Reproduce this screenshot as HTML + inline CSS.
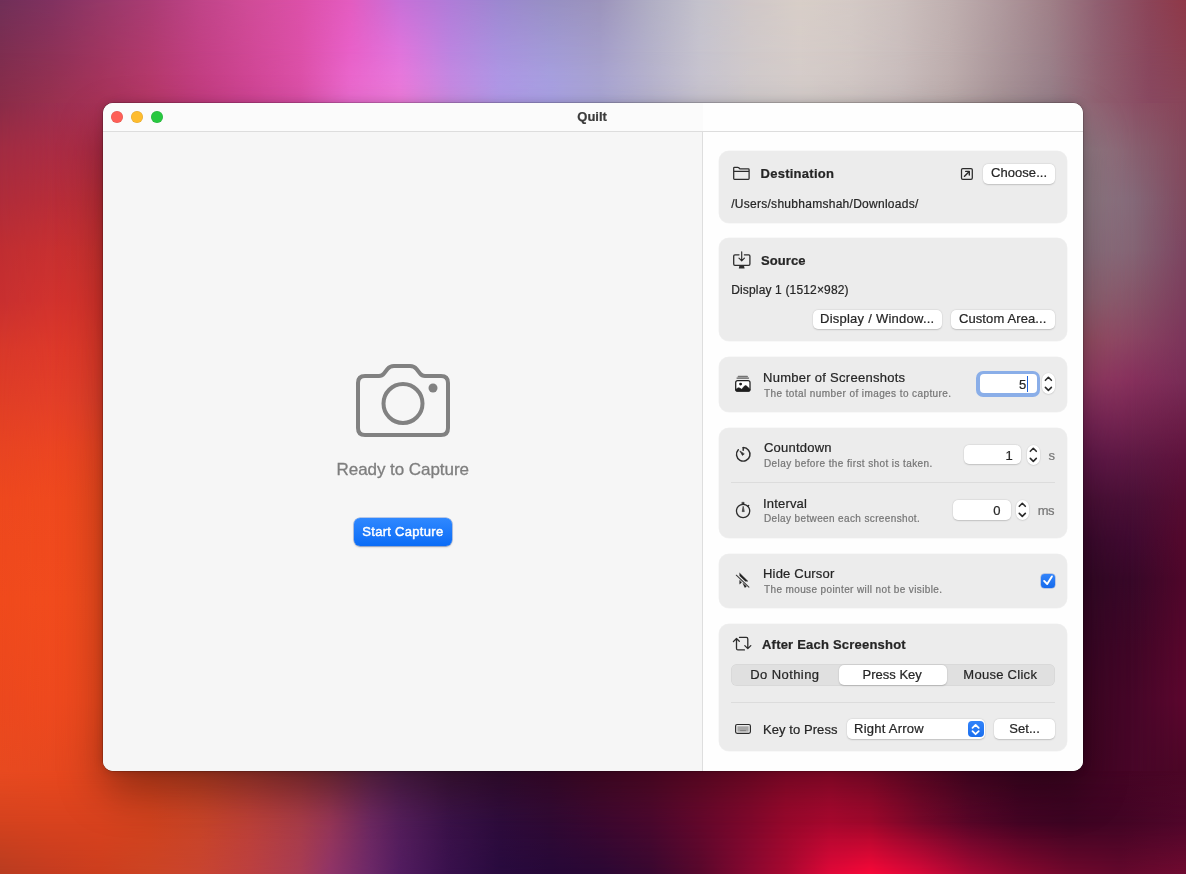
<!DOCTYPE html>
<html><head><meta charset="utf-8"><title>Quilt</title>
<style>
*{box-sizing:border-box;margin:0;padding:0}
html,body{width:1186px;height:874px;overflow:hidden}
body{font-family:"Liberation Sans",sans-serif;color:#262626;position:relative;background:#8a2040}
#bta,#btb,#btc{position:absolute;left:0px;top:0px;width:1186px;height:117px}
#bta{background:linear-gradient(to right,#703058 0.00%,#803260 4.22%,#963868 8.43%,#aa3c74 12.65%,#c04488 16.86%,#d04c98 21.08%,#dc50a8 25.30%,#e45cc0 29.51%,#c870d8 33.73%,#b07cd8 37.94%,#9c88d0 42.16%,#9890c4 46.37%,#9c94bc 50.59%,#b0aec4 54.81%,#c4c2cc 59.02%,#d0c8c8 63.24%,#d8cec8 67.45%,#d4cac6 71.67%,#ccc0be 75.89%,#c0b0b0 80.10%,#b09a9e 84.32%,#a08088 88.53%,#905e70 92.75%,#8c4458 96.96%,#903848 100.00%)}
#btb{background:linear-gradient(to right,#7d2e50 0.00%,#8c3157 4.22%,#9f3560 8.43%,#b13a6e 12.65%,#c24084 16.86%,#d04896 21.08%,#dc50a8 25.30%,#e860c8 29.51%,#e074dc 33.73%,#bc84e0 37.94%,#a892de 42.16%,#a29ad6 46.37%,#a49eca 50.59%,#b4b1ca 54.81%,#c6c3ce 59.02%,#d0c9ca 63.24%,#d6cdc9 67.45%,#d2c8c5 71.67%,#cabebd 75.89%,#beaeae 80.10%,#ac979b 84.32%,#9c8089 88.53%,#905f70 92.75%,#8a465c 96.96%,#8c3e50 100.00%);-webkit-mask-image:linear-gradient(to bottom,rgba(0,0,0,0) 0px,#000 52px);mask-image:linear-gradient(to bottom,rgba(0,0,0,0) 0px,#000 52px)}
#btc{background:linear-gradient(to right,#8a2c48 0.00%,#98304e 4.22%,#a83258 8.43%,#b83868 12.65%,#c43c80 16.86%,#d04494 21.08%,#dc50a8 25.30%,#ec6cd0 29.51%,#f07cdc 33.73%,#cc8ce4 37.94%,#b49cec 42.16%,#aca4e8 46.37%,#aca8d8 50.59%,#b8b4d0 54.81%,#c8c4d0 59.02%,#d0cacc 63.24%,#d4ccca 67.45%,#d0c6c4 71.67%,#c8bcbc 75.89%,#bcacac 80.10%,#a89498 84.32%,#98808a 88.53%,#906070 92.75%,#884860 96.96%,#884458 100.00%);-webkit-mask-image:linear-gradient(to bottom,rgba(0,0,0,0) 52px,#000 103px);mask-image:linear-gradient(to bottom,rgba(0,0,0,0) 52px,#000 103px)}
#bba,#bbb,#bbc{position:absolute;left:0px;top:757px;width:1186px;height:117px}
#bba{background:linear-gradient(to right,#e84a20 0.00%,#e8481e 4.22%,#e4461e 8.43%,#d8441e 12.65%,#c84224 16.86%,#b43c30 21.08%,#9c3438 25.30%,#883040 27.82%,#6c2850 31.20%,#582050 33.73%,#44163e 37.94%,#3c0e38 42.16%,#420a32 46.37%,#500a2c 50.59%,#5e0a2c 54.81%,#740a2c 59.02%,#8c0a2e 63.24%,#a00a30 66.27%,#a80a32 69.98%,#980a30 73.36%,#74082c 77.57%,#540628 81.79%,#440424 86.00%,#400422 90.22%,#440424 94.44%,#4c0626 100.00%)}
#bbb{background:linear-gradient(to right,#d4421e 0.00%,#d8421e 4.22%,#d8421e 8.43%,#d0421e 12.65%,#c84428 16.86%,#bc4038 21.08%,#a83c48 25.30%,#963656 27.82%,#6c2860 31.20%,#541e5a 33.73%,#3a1248 37.94%,#2e0c3c 42.16%,#300a34 46.37%,#3c0830 50.59%,#4a082e 54.81%,#64082c 59.02%,#80082c 63.24%,#98082c 66.27%,#a8082e 69.98%,#a0082c 73.36%,#78082a 77.57%,#580628 81.79%,#440424 86.00%,#3c0422 90.22%,#420424 94.44%,#50062a 100.00%);-webkit-mask-image:linear-gradient(to bottom,rgba(0,0,0,0) 14px,#000 65px);mask-image:linear-gradient(to bottom,rgba(0,0,0,0) 14px,#000 65px)}
#bbc{background:linear-gradient(to right,#b83c20 0.00%,#c43c20 4.22%,#cc3e1e 8.43%,#cc4424 12.65%,#c84430 16.86%,#bc4040 21.08%,#a83c54 25.30%,#903468 27.82%,#6c2868 31.20%,#521c60 33.73%,#38104c 37.94%,#280a3e 42.16%,#260838 46.37%,#2a0834 50.59%,#380830 54.81%,#58082c 59.02%,#880830 63.24%,#a80830 66.27%,#e00838 69.98%,#f80838 73.36%,#d80838 77.57%,#a80834 81.79%,#88082e 86.00%,#70082c 90.22%,#64082c 94.44%,#700a30 100.00%);-webkit-mask-image:linear-gradient(to bottom,rgba(0,0,0,0) 65px,#000 117px);mask-image:linear-gradient(to bottom,rgba(0,0,0,0) 65px,#000 117px)}
#bla,#blb,#blc{position:absolute;left:0px;top:103px;width:117px;height:668px}
#bla{background:linear-gradient(to bottom,#8a2c48 0.00%,#a22c42 7.04%,#b02c3a 14.52%,#c02e32 22.01%,#c83030 29.49%,#d8382a 36.98%,#e03e26 44.46%,#e84422 51.95%,#ee481e 59.43%,#f04a1c 74.40%,#ec481e 89.37%,#e84a20 100.00%)}
#blb{background:linear-gradient(to bottom,#992f50 0.00%,#a92c44 7.04%,#b72d39 14.52%,#c73031 22.01%,#d1322e 29.49%,#dd392a 36.98%,#e33f28 44.46%,#eb4522 51.95%,#ef491e 59.43%,#f14b1d 74.40%,#ee491e 89.37%,#e6481f 100.00%);-webkit-mask-image:linear-gradient(to right,rgba(0,0,0,0) 0px,#000 52px);mask-image:linear-gradient(to right,rgba(0,0,0,0) 0px,#000 52px)}
#blc{background:linear-gradient(to bottom,#a83258 0.00%,#b02c46 7.04%,#be2e38 14.52%,#ce3230 22.01%,#da342c 29.49%,#e23a2a 36.98%,#e6402a 44.46%,#ee4622 51.95%,#f04a1e 59.43%,#f24c1e 74.40%,#f04a1e 89.37%,#e4461e 100.00%);-webkit-mask-image:linear-gradient(to right,rgba(0,0,0,0) 52px,#000 103px);mask-image:linear-gradient(to right,rgba(0,0,0,0) 52px,#000 103px)}
#bra,#brb,#brc{position:absolute;left:1069px;top:103px;width:117px;height:668px}
#bra{background:linear-gradient(to bottom,#946c7a 0.00%,#98808a 7.04%,#947e88 14.52%,#907482 22.01%,#946676 29.49%,#9c5268 35.48%,#983e66 41.47%,#7e285a 47.46%,#62184a 53.44%,#4c1038 59.43%,#3c0a2e 65.42%,#340826 71.41%,#3a0626 81.89%,#3e0624 89.37%,#400422 100.00%)}
#brb{background:linear-gradient(to bottom,#8b5065 0.00%,#886070 7.04%,#846878 14.52%,#846474 22.01%,#865468 29.49%,#8a4462 35.48%,#86305c 41.47%,#72244f 47.46%,#5c1842 53.44%,#4a1036 59.43%,#400a30 65.42%,#380828 71.41%,#400626 81.89%,#460628 89.37%,#480628 100.00%);-webkit-mask-image:linear-gradient(to right,rgba(0,0,0,0) 14px,#000 65px);mask-image:linear-gradient(to right,rgba(0,0,0,0) 14px,#000 65px)}
#brc{background:linear-gradient(to bottom,#884458 0.00%,#84485c 7.04%,#80485e 14.52%,#7c4460 22.01%,#7c3c5c 29.49%,#7c345a 35.48%,#782c56 41.47%,#6c1e48 47.46%,#5e123c 53.44%,#560c32 59.43%,#54082c 65.42%,#50062a 71.41%,#58062c 81.89%,#5c062e 89.37%,#4c0626 100.00%);-webkit-mask-image:linear-gradient(to right,rgba(0,0,0,0) 65px,#000 117px);mask-image:linear-gradient(to right,rgba(0,0,0,0) 65px,#000 117px)}
#win{position:absolute;left:103px;top:103px;width:980px;height:668px;border-radius:10px;background:#f6f6f6;overflow:hidden;
box-shadow:0 0 0 0.5px rgba(0,0,0,0.3),0 20px 44px rgba(0,0,0,0.34),0 0 10px rgba(0,0,0,0.18)}
#c{position:absolute;left:-103px;top:-103px;width:1186px;height:874px;will-change:transform}
#c div,#c svg{position:absolute}
#tb{left:103px;top:103px;width:980px;height:28px;background:#fbfbfb}
#tbl{left:103px;top:131px;width:980px;height:1px;background:#dddddd}
.tl{top:111px;width:12px;height:12px;border-radius:50%}
#lp{left:103px;top:132px;width:599px;height:639px;background:#f6f6f6}
#rp{left:703px;top:132px;width:380px;height:639px;background:#fefefe}
#dv{left:702px;top:132px;width:1px;height:639px;background:#dedede}
.card{left:719px;width:348px;background:#ececec;border-radius:10px;box-shadow:0 0 0 0.5px rgba(0,0,0,0.05)}
.x{white-space:nowrap;line-height:1;-webkit-text-stroke:0.22px currentColor}
.btn{background:#fff;border-radius:5px;box-shadow:0 0 0 0.5px rgba(0,0,0,0.03),0 0.5px 1.5px rgba(0,0,0,0.17)}
.fld{background:#fff;border-radius:5px;box-shadow:0 0 0 0.5px rgba(0,0,0,0.04),0 0.5px 1.5px rgba(0,0,0,0.16)}
.stp{background:#fff;border-radius:6.6px;box-shadow:0 0 0 0.5px rgba(0,0,0,0.03),0 0.5px 1.5px rgba(0,0,0,0.17)}
.hr{height:1px;background:#dcdcdc;left:731px;width:324px}
</style></head><body>
<div id="bta"></div><div id="btb"></div><div id="btc"></div>
<div id="bba"></div><div id="bbb"></div><div id="bbc"></div>
<div id="bla"></div><div id="blb"></div><div id="blc"></div>
<div id="bra"></div><div id="brb"></div><div id="brc"></div>
<div id="win"><div id="c">
<div id="tb"></div><div style="left:703px;top:103px;width:380px;height:28px;background:#fefefe"></div><div id="tbl"></div>
<div class="tl" style="left:111px;background:#fe5f57;box-shadow:inset 0 0 0 0.5px rgba(0,0,0,0.12)"></div>
<div class="tl" style="left:131px;background:#febc2e;box-shadow:inset 0 0 0 0.5px rgba(0,0,0,0.12)"></div>
<div class="tl" style="left:151px;background:#28c840;box-shadow:inset 0 0 0 0.5px rgba(0,0,0,0.12)"></div>
<div id="lp"></div><div id="rp"></div><div id="dv"></div>

<!-- camera -->
<svg style="left:350px;top:360px" width="106" height="84" viewBox="350 360 106 84" fill="none" stroke="#818181" stroke-width="4" stroke-linejoin="round" stroke-linecap="round">
<path d="M365 376 H379 Q382 376 384 373.5 L387.5 369 Q390 366 394 366 H410 Q414 366 416.500 369 L420 373.500 Q422 376 425 376 H441 Q448 376 448 383 V428 Q448 435 441 435 H365 Q358 435 358 428 V383 Q358 376 365 376 Z"/>
<circle cx="403" cy="403.500" r="19.500"/>
<circle cx="433" cy="388" r="4.500" fill="#818181" stroke="none"/>
</svg>
<div style="left:353.500px;top:518px;width:98px;height:28px;border-radius:6px;background:linear-gradient(#2f88ff,#0b6cf6);box-shadow:0 0 0 0.5px rgba(0,70,200,0.5),0 1px 2px rgba(0,0,0,0.25)"></div>

<!-- cards -->
<div class="card" style="top:151px;height:71.500px"></div>
<div class="card" style="top:238px;height:103px"></div>
<div class="card" style="top:357px;height:54.500px"></div>
<div class="card" style="top:427.500px;height:110.500px"></div>
<div class="card" style="top:553.500px;height:54.500px"></div>
<div class="card" style="top:624px;height:126.500px"></div>

<!-- destination -->
<div class="btn" style="left:983px;top:164px;width:71.500px;height:19.500px"></div>
<!-- source -->
<div class="btn" style="left:813px;top:309.500px;width:128.500px;height:19.500px"></div>
<div class="btn" style="left:950.500px;top:309.500px;width:104.500px;height:19.500px"></div>
<!-- number -->
<div style="left:976px;top:370.700px;width:64px;height:26px;border-radius:7px;background:#8aaee8"></div>
<div style="left:979.600px;top:374px;width:57.200px;height:19.400px;border-radius:4px;background:#fff"></div>
<div style="left:1026.500px;top:376px;width:1.500px;height:15.600px;background:#1f62d8"></div>
<div class="stp" style="left:1041.800px;top:373.400px;width:13.200px;height:20.600px"></div>
<!-- countdown -->
<div class="fld" style="left:964.200px;top:445.200px;width:57.300px;height:19px"></div>
<div class="stp" style="left:1026.800px;top:445px;width:13.200px;height:20px"></div>
<div class="hr" style="top:482px"></div>
<div class="fld" style="left:953.200px;top:500.200px;width:58px;height:19.400px"></div>
<div class="stp" style="left:1015.800px;top:500px;width:13.200px;height:20px"></div>
<!-- hide cursor -->
<div style="left:1041px;top:573.600px;width:14px;height:14px;border-radius:3.500px;background:linear-gradient(#3384fa,#156aec);box-shadow:0 0 0 0.5px rgba(0,60,190,0.4)"></div>
<!-- after each -->
<div style="left:731px;top:664px;width:323.500px;height:21.500px;border-radius:6px;background:#e0e0e0;box-shadow:inset 0 0 0 0.5px rgba(0,0,0,0.06)"></div>
<div class="btn" style="left:839px;top:665px;width:107.500px;height:19.500px"></div>
<div class="hr" style="top:702px"></div>
<div class="btn" style="left:846.500px;top:719px;width:138px;height:20px"></div>
<div style="left:967.700px;top:720.900px;width:16px;height:16.200px;border-radius:4px;background:linear-gradient(#3384fa,#1a6eee)"></div>
<div class="btn" style="left:994px;top:719px;width:61px;height:20px"></div>

<svg style="left:0;top:0" width="1186" height="874" viewBox="0 0 1186 874" fill="none" stroke="#2c2c2c" stroke-width="1.3" stroke-linecap="round" stroke-linejoin="round">
<!-- folder -->
<path d="M733.700 178.500 V168.100 Q733.700 167.300 734.500 167.300 H737.700 Q738.300 167.300 738.800 167.800 L739.500 168.500 Q739.900 168.900 740.500 168.900 H748.300 Q749.100 168.900 749.100 169.700 V178.500 Q749.100 179.300 748.300 179.300 H734.500 Q733.700 179.300 733.700 178.500 Z M733.700 171.300 H749.100" stroke-width="1.250"/>
<!-- reveal arrow in square -->
<rect x="961.500" y="168.500" width="10.800" height="10.800" rx="1.300" stroke-width="1.250"/>
<path d="M964.500 176.200 L969 171.700" stroke-width="1.500"/><path d="M965.700 171.400 H969.300 V175" stroke-width="1.400"/>
<!-- source: monitor w/ arrow -->
<path d="M739 254.800 H734.900 Q733.700 254.800 733.700 256 V264.100 Q733.700 265.300 734.900 265.300 H748.700 Q749.900 265.300 749.900 264.100 V256 Q749.900 254.800 748.700 254.800 H744.400"/>
<path d="M741.700 251.800 V260.500 M739 258.200 L741.700 260.900 L744.400 258.200" stroke-width="1.150"/>
<path d="M739.400 265.700 H744 L744.600 268.600 H738.800 Z" fill="#2c2c2c" stroke="none"/>
<!-- photo stack -->
<rect x="735.700" y="380.600" width="14.300" height="10.600" rx="2" fill="#fff" stroke="#1e1e1e" stroke-width="1.250"/>
<path d="M735.700 389.600 L737.700 388.100 Q738.900 387.300 740 388.200 L741.700 389.300 L744.200 386.300 Q745.600 384.900 747 386.300 L750 389.300 V389.600 Q750 391.200 748.400 391.200 H737.300 Q735.700 391.200 735.700 389.600 Z" fill="#1e1e1e" stroke="#1e1e1e" stroke-width="0.600"/>
<circle cx="740.600" cy="384.100" r="1.450" fill="#1e1e1e" stroke="none"/>
<path d="M737 378.100 H748.600" stroke="#5c5c5c" stroke-width="1.100"/>
<path d="M738.400 376.400 H747.200" stroke="#747474" stroke-width="1.500"/>
<!-- countdown timer -->
<path d="M743.200 447.600 A6.750 6.750 0 1 1 738.300 449.750" stroke-width="1.450"/>
<path d="M743.200 447.600 V450.300" stroke-width="1.450"/>
<path d="M740.100 451.300 L742.500 455.400 L744 454.100 Z" fill="#2c2c2c" stroke-width="0.700"/>
<!-- stopwatch -->
<circle cx="743.100" cy="511" r="6.650"/>
<path d="M742.200 502.300 H744.100 V504 H742.200 Z" fill="#2c2c2c" stroke-width="0.500"/>
<path d="M747.800 506.300 L748.600 505.500" stroke-width="1.500"/>
<path d="M743.100 506.600 L742.200 511.600 H744 Z" fill="#2c2c2c" stroke-width="0.600"/>
<!-- hide cursor -->
<path d="M739.800 573.200 L747.900 581.200 H745.400 L739.800 575.900 Z" fill="#1e1e1e" stroke="#1e1e1e" stroke-width="0.400"/>
<path d="M739.700 580.500 V584.100 L741.500 582.400 Z" fill="#1e1e1e" stroke="#1e1e1e" stroke-width="0.400"/>
<path d="M743 583.500 L744.800 587.400 L746.400 586.700 L745.800 585.700 Z" fill="#1e1e1e" stroke="#1e1e1e" stroke-width="0.400"/>
<path d="M736.300 575.200 L748.900 587.200" stroke="#3c3c3c" stroke-width="1.050"/>
<!-- repeat -->
<path d="M733.400 641.600 L736.500 638.500 L739.300 641.300 M736.500 638.700 V648.400 Q736.500 649.900 738 649.900 H744.400"/>
<path d="M739.500 637.400 H746.300 Q747.800 637.400 747.800 638.900 V648.400 M744.800 645.600 L747.800 648.600 L750.800 645.600"/>
<!-- keyboard -->
<rect x="735.600" y="724.500" width="14.800" height="8.800" rx="1.500" stroke-width="1.200"/>
<rect x="737.400" y="726.300" width="11.200" height="5.300" fill="#a8a8a8" stroke="none"/>
<path d="M740.500 730.600 H745.500" stroke="#7a7a7a" stroke-width="0.900"/>
<!-- stepper chevrons -->
<g stroke-width="1.600" stroke="#2a2a2a">
<path d="M1045.400 380.300 L1048.400 377.300 L1051.400 380.300 M1045.400 387.400 L1048.400 390.400 L1051.400 387.400"/>
<path d="M1030.300 451.300 L1033.300 448.300 L1036.300 451.300 M1030.300 458.400 L1033.300 461.400 L1036.300 458.400"/>
<path d="M1019.300 506.300 L1022.300 503.300 L1025.300 506.300 M1019.300 513.400 L1022.300 516.400 L1025.300 513.400"/>
</g>
<!-- checkbox check -->
<path d="M1044.100 580.900 L1047.200 584 L1051.900 576.400" stroke="#fff" stroke-width="1.900"/>
<!-- popup chevrons -->
<path d="M972.500 727.900 L975.600 724.900 L978.700 727.900 M972.500 731.200 L975.600 734.200 L978.700 731.200" stroke="#fff" stroke-width="1.800"/>
</svg>

<div class="x" style="left:577.30px;top:109.60px;font-size:13px;color:#3c3c3c;letter-spacing:0.006px;font-weight:bold">Quilt</div>
<div class="x" style="left:336.60px;top:460.60px;font-size:17px;color:#7e7e7e;letter-spacing:-0.059px;-webkit-text-stroke:0.3px #7e7e7e">Ready to Capture</div>
<div class="x" style="left:362.30px;top:525.00px;font-size:13px;color:#ffffff;letter-spacing:0.293px;-webkit-text-stroke:0.45px #fff">Start Capture</div>
<div class="x" style="left:760.50px;top:167.40px;font-size:13px;color:#262626;letter-spacing:0.266px;font-weight:bold">Destination</div>
<div class="x" style="left:991.00px;top:166.00px;font-size:13px;color:#262626;letter-spacing:0.059px">Choose...</div>
<div class="x" style="left:731.20px;top:197.50px;font-size:12px;color:#262626;letter-spacing:0.275px">/Users/shubhamshah/Downloads/</div>
<div class="x" style="left:761.10px;top:254.40px;font-size:13px;color:#262626;letter-spacing:0.052px;font-weight:bold">Source</div>
<div class="x" style="left:731.20px;top:284.20px;font-size:12px;color:#262626;letter-spacing:0.157px">Display 1 (1512×982)</div>
<div class="x" style="left:820.00px;top:312.00px;font-size:13px;color:#262626;letter-spacing:0.244px">Display / Window...</div>
<div class="x" style="left:958.90px;top:312.00px;font-size:13px;color:#262626;letter-spacing:0.117px">Custom Area...</div>
<div class="x" style="left:763.00px;top:371.00px;font-size:13px;color:#262626;letter-spacing:0.277px">Number of Screenshots</div>
<div class="x" style="left:764.00px;top:389.00px;font-size:10px;color:#767676;letter-spacing:0.414px">The total number of images to capture.</div>
<div class="x" style="left:1019.00px;top:378.00px;font-size:13px;color:#262626;letter-spacing:0.000px">5</div>
<div class="x" style="left:764.00px;top:441.00px;font-size:13px;color:#262626;letter-spacing:0.220px">Countdown</div>
<div class="x" style="left:764.00px;top:459.00px;font-size:10px;color:#767676;letter-spacing:0.398px">Delay before the first shot is taken.</div>
<div class="x" style="left:1005.60px;top:448.60px;font-size:13px;color:#262626;letter-spacing:0.000px">1</div>
<div class="x" style="left:1048.40px;top:448.60px;font-size:13px;color:#767676;letter-spacing:0.000px">s</div>
<div class="x" style="left:763.00px;top:497.00px;font-size:13px;color:#262626;letter-spacing:0.180px">Interval</div>
<div class="x" style="left:764.00px;top:514.30px;font-size:10px;color:#767676;letter-spacing:0.369px">Delay between each screenshot.</div>
<div class="x" style="left:993.20px;top:503.70px;font-size:13px;color:#262626;letter-spacing:0.000px">0</div>
<div class="x" style="left:1037.80px;top:503.70px;font-size:13px;color:#767676;letter-spacing:-0.600px">ms</div>
<div class="x" style="left:763.00px;top:567.30px;font-size:13px;color:#262626;letter-spacing:0.197px">Hide Cursor</div>
<div class="x" style="left:764.00px;top:585.20px;font-size:10px;color:#767676;letter-spacing:0.379px">The mouse pointer will not be visible.</div>
<div class="x" style="left:762.00px;top:638.00px;font-size:13px;color:#262626;letter-spacing:0.210px;font-weight:bold">After Each Screenshot</div>
<div class="x" style="left:750.20px;top:668.40px;font-size:13px;color:#262626;letter-spacing:0.421px">Do Nothing</div>
<div class="x" style="left:862.50px;top:668.40px;font-size:13px;color:#262626;letter-spacing:0.007px">Press Key</div>
<div class="x" style="left:963.30px;top:668.40px;font-size:13px;color:#262626;letter-spacing:0.280px">Mouse Click</div>
<div class="x" style="left:763.00px;top:723.00px;font-size:13px;color:#262626;letter-spacing:0.073px">Key to Press</div>
<div class="x" style="left:854.00px;top:722.40px;font-size:13px;color:#262626;letter-spacing:0.248px">Right Arrow</div>
<div class="x" style="left:1009.30px;top:722.40px;font-size:13px;color:#262626;letter-spacing:0.033px">Set...</div>
</div></div>
</body></html>
